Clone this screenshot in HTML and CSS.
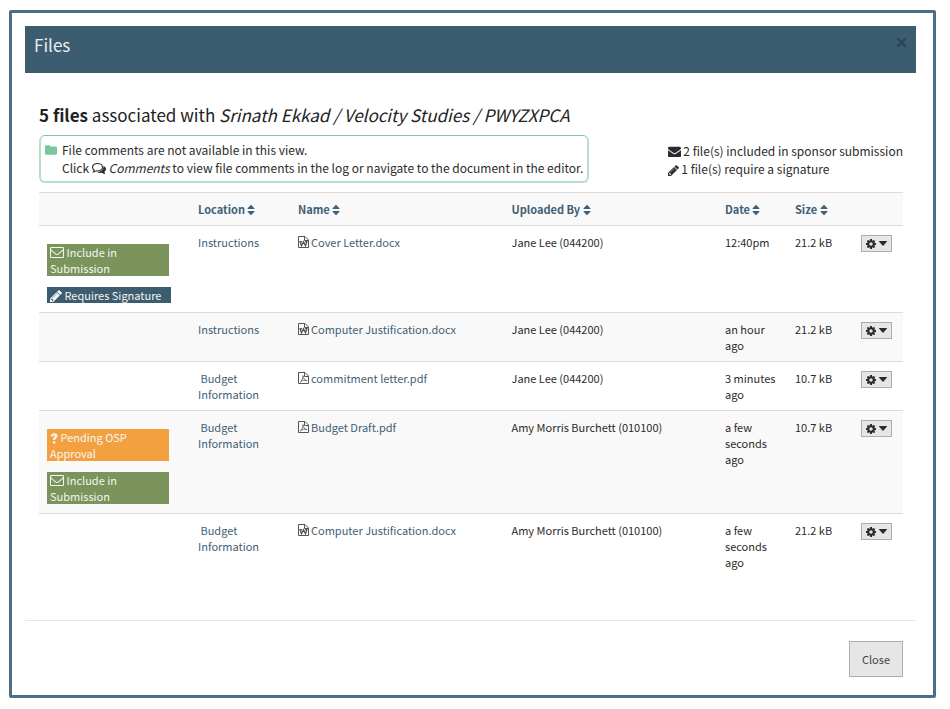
FILE: index.html
```html
<!DOCTYPE html>
<html lang="en">
<head>
<meta charset="utf-8">
<title>Files</title>
<link rel="stylesheet" href="styles.css">
</head>
<body>
<svg class="sprite" aria-hidden="true">
  <symbol id="envelope" viewBox="0 0 1792 1792"><path d="M1792 710v794q0 66-47 113t-113 47h-1472q-66 0-113-47t-47-113v-794q44 49 101 87 362 246 497 345 57 42 92.500 65.500t94.500 48 110 24.500h2q51 0 110-24.500t94.500-48 92.500-65.500q170-123 498-345 57-39 100-87zm0-294q0 79-49 151t-122 123q-376 261-468 325-10 7-42.500 31t-54 38-52 32.500-57.500 27-50 9h-2q-23 0-50-9t-57.500-27-52-32.500-54-38-42.500-31q-91-64-262-182.500t-205-142.500q-62-42-117-115.500t-55-136.500q0-78 41.500-130t118.500-52h1472q65 0 112.500 47t47.500 113z"/></symbol>
  <symbol id="envelope-open" viewBox="0 0 1792 1792"><path d="M1664 1504v-768q-32 36-69 66-268 206-426 338-51 43-83 67t-86.500 48.500-102.500 24.500h-2q-48 0-102.500-24.500t-86.500-48.500-83-67q-158-132-426-338-37-30-69-66v768q0 13 9.500 22.500t22.500 9.500h1472q13 0 22.500-9.500t9.500-22.500zm0-1051v-24.500l-.5-13-3-12.500-5.500-9-9-7.500-14-2.500h-1472q-13 0-22.500 9.500t-9.500 22.500q0 168 147 284 193 152 401 317 6 5 35 29.500t46 37.500 44.500 31.500 50.500 27.500 43 9h2q20 0 43-9t50.500-27.500 44.500-31.500 46-37.500 35-29.500q208-165 401-317 54-43 100.500-115.500t46.500-131.500zm128-37v1088q0 66-47 113t-113 47h-1472q-66 0-113-47t-47-113v-1088q0-66 47-113t113-47h1472q66 0 113 47t47 113z"/></symbol>
  <symbol id="pencil" viewBox="128 128 1536 1536"><path d="M491 1536l91-91-235-235-91 91v107h128v128h107zm523-928q0-22-22-22-10 0-17 7l-542 542q-7 7-7 17 0 22 22 22 10 0 17-7l542-542q7-7 7-17zm-54-192l416 416-832 832h-416v-416zm683 96q0 53-37 90l-166 166-416-416 166-165q36-38 90-38 53 0 91 38l235 234q37 39 37 91z"/></symbol>
  <symbol id="cog" viewBox="128 128 1536 1536"><path d="M1152 896q0-106-75-181t-181-75-181 75-75 181 75 181 181 75 181-75 75-181zm512-109v222q0 12-8 23t-20 13l-185 28q-19 54-39 91 35 50 107 138 10 12 10 25t-9 23q-27 37-99 108t-94 71q-12 0-26-9l-138-108q-44 23-91 38-16 136-29 186-7 28-36 28h-222q-14 0-24.500-8.500t-11.500-21.500l-28-184q-49-16-90-37l-141 107q-10 9-25 9-14 0-25-11-126-114-165-168-7-10-7-23 0-12 8-23 15-21 51-66.500t54-70.500q-27-50-41-99l-183-27q-13-2-21-12.500t-8-23.500v-222q0-12 8-23t19-13l186-28q14-46 39-92-40-57-107-138-10-12-10-24 0-10 9-23 26-36 98.500-107.500t94.500-71.500q13 0 26 10l138 107q44-23 91-38 16-136 29-186 7-28 36-28h222q14 0 24.500 8.500t11.500 21.500l28 184q49 16 90 37l142-107q9-9 24-9 13 0 25 10 129 119 165 170 7 8 7 22 0 12-8 23-15 21-51 66.500t-54 70.500q26 50 41 98l183 28q13 2 21 12.500t8 23.500z"/></symbol>
  <symbol id="sort" viewBox="0 0 8 12"><path d="M4 .8 7.400 4.300q.5.700-.4.700H1q-.9 0-.4-.7zM4 11.200.6 7.700Q.1 7 1 7h6q.9 0 .4.700z"/></symbol>
  <symbol id="caret" viewBox="0 0 8 5"><path d="M.5 0h7q.8 0 .3.700L4.500 4.400q-.5.500-1 0L.2.700Q-.3 0 .5 0z"/></symbol>
  <symbol id="folder" viewBox="0 0 12 10"><path d="M0 1.600Q0 .2 1.500.2h2.600q1.200 0 1.400 1.400h5Q12 1.600 12 3v5.300q0 1.500-1.500 1.500h-9Q0 9.800 0 8.300z"/></symbol>
  <symbol id="comments" viewBox="0 0 14 12"><path d="M5.500.5C2.700.5.500 2.100.5 4.200c0 1.200.7 2.200 1.800 2.900L1.400 8.900c1 0 2-.4 2.800-1l1.300.1c2.800 0 5-1.700 5-3.800S8.300.5 5.500.5z" fill="none" stroke="currentColor" stroke-width="1.100"/><path d="M11.500 3c1.500.6 2.500 1.800 2.500 3.100 0 1.200-.7 2.100-1.700 2.800l1 2.200c-1.400-.1-2.500-.6-3.300-1.300-1.900.3-3.800 0-5-.8 3.800.2 6.700-2.100 6.500-6z"/></symbol>
  <symbol id="question" viewBox="0 0 8 11"><path d="M.6 3.100Q1.500.2 4.200.2 7.500.2 7.500 3q0 1.500-1.600 2.400-.7.400-.7 1.500H2.900q0-1.900 1.100-2.600 1-.6 1-1.200 0-.8-.9-.8-.8 0-1.500 1.500zM2.900 8.200h2.400v2.400H2.900z"/></symbol>
  <symbol id="file-word" viewBox="0 0 11 12"><path d="M.5.500h6.500l3.500 3.500v7.500H.5zM6.500.5v4h4" fill="none" stroke="currentColor"/><path d="M2 5.500l1.500 4.300 2-4 2 4L9 5.500M1.500 5.700h2.500M7 5.700h2.500" fill="none" stroke="currentColor" stroke-width="1.300"/></symbol>
  <symbol id="file-pdf" viewBox="0 0 11 12"><path d="M.5.500h6.500l3.500 3.500v7.500H.5zM6.500.5v4h4" fill="none" stroke="currentColor"/><path d="M2.300 10c1.600-1 3.100-4 2.700-6.400.1 2.500 1.600 4.500 3.900 5.100C6.600 7.800 4 8.200 2.300 10z" fill="none" stroke="currentColor" stroke-width=".8"/></symbol>
  <symbol id="cross" viewBox="0 0 10 10"><path d="M1.300 1.300l7.400 7.400M8.700 1.300L1.300 8.700" fill="none" stroke="currentColor" stroke-width="2.400"/></symbol>
</svg>
<main class="modal">
  <header class="modal-header">
    <h1>Files</h1>
    <button class="dismiss" type="button" aria-label="Dismiss"><svg class="icon"><use href="#cross"/></svg></button>
  </header>
  <section class="modal-body">
    <h2><strong>5 files</strong> associated with <em>Srinath Ekkad / Velocity Studies / PWYZXPCA</em></h2>
    <div class="overview">
      <div class="notice">
        <svg class="icon folder"><use href="#folder"/></svg>
        <p>File comments are not available in this view.<br>Click <svg class="icon comments"><use href="#comments"/></svg> <em>Comments</em> to view file comments in the log or navigate to the document in the editor.</p>
      </div>
      <ul class="summary">
        <li><svg class="icon mail"><use href="#envelope"/></svg> 2 file(s) included in sponsor submission</li>
        <li><svg class="icon pencil"><use href="#pencil"/></svg> 1 file(s) require a signature</li>
      </ul>
    </div>
    <table>
      <colgroup><col class="c-tags"><col class="c-location"><col class="c-name"><col class="c-user"><col class="c-date"><col class="c-size"><col class="c-menu"></colgroup>
      <thead>
        <tr>
          <th></th>
          <th><a href="#">Location <svg class="icon sort"><use href="#sort"/></svg></a></th>
          <th><a href="#">Name <svg class="icon sort"><use href="#sort"/></svg></a></th>
          <th><a href="#">Uploaded By <svg class="icon sort"><use href="#sort"/></svg></a></th>
          <th><a href="#">Date <svg class="icon sort"><use href="#sort"/></svg></a></th>
          <th><a href="#">Size <svg class="icon sort"><use href="#sort"/></svg></a></th>
          <th></th>
        </tr>
      </thead>
      <tbody>
        <tr>
          <td><ul class="tags">
            <li class="tag include"><svg class="icon open"><use href="#envelope-open"/></svg> Include in Submission</li>
            <li class="tag signature"><svg class="icon pen"><use href="#pencil"/></svg> Requires Signature</li>
          </ul></td>
          <td><a href="#">Instructions</a></td>
          <td><a class="file" href="#"><svg class="icon"><use href="#file-word"/></svg>Cover Letter.docx</a></td>
          <td>Jane Lee (044200)</td><td>12:40pm</td><td>21.2 kB</td>
          <td><button class="menu" type="button" aria-label="Actions"><svg class="icon cog"><use href="#cog"/></svg><svg class="icon caret"><use href="#caret"/></svg></button></td>
        </tr>
        <tr>
          <td></td>
          <td><a href="#">Instructions</a></td>
          <td><a class="file" href="#"><svg class="icon"><use href="#file-word"/></svg>Computer Justification.docx</a></td>
          <td>Jane Lee (044200)</td><td>an hour ago</td><td>21.2 kB</td>
          <td><button class="menu" type="button" aria-label="Actions"><svg class="icon cog"><use href="#cog"/></svg><svg class="icon caret"><use href="#caret"/></svg></button></td>
        </tr>
        <tr>
          <td></td>
          <td><a href="#">&nbsp;Budget Information</a></td>
          <td><a class="file" href="#"><svg class="icon"><use href="#file-pdf"/></svg>commitment letter.pdf</a></td>
          <td>Jane Lee (044200)</td><td>3 minutes ago</td><td>10.7 kB</td>
          <td><button class="menu" type="button" aria-label="Actions"><svg class="icon cog"><use href="#cog"/></svg><svg class="icon caret"><use href="#caret"/></svg></button></td>
        </tr>
        <tr>
          <td><ul class="tags">
            <li class="tag pending"><svg class="icon question"><use href="#question"/></svg> Pending OSP Approval</li>
            <li class="tag include"><svg class="icon open"><use href="#envelope-open"/></svg> Include in Submission</li>
          </ul></td>
          <td><a href="#">&nbsp;Budget Information</a></td>
          <td><a class="file" href="#"><svg class="icon"><use href="#file-pdf"/></svg>Budget Draft.pdf</a></td>
          <td>Amy Morris Burchett (010100)</td><td>a few seconds ago</td><td>10.7 kB</td>
          <td><button class="menu" type="button" aria-label="Actions"><svg class="icon cog"><use href="#cog"/></svg><svg class="icon caret"><use href="#caret"/></svg></button></td>
        </tr>
        <tr>
          <td></td>
          <td><a href="#">&nbsp;Budget Information</a></td>
          <td><a class="file" href="#"><svg class="icon"><use href="#file-word"/></svg>Computer Justification.docx</a></td>
          <td>Amy Morris Burchett (010100)</td><td>a few seconds ago</td><td>21.2 kB</td>
          <td><button class="menu" type="button" aria-label="Actions"><svg class="icon cog"><use href="#cog"/></svg><svg class="icon caret"><use href="#caret"/></svg></button></td>
        </tr>
      </tbody>
    </table>
  </section>
  <footer class="modal-footer"><button class="close" type="button">Close</button></footer>
</main>
</body>
</html>
```
FILE: styles.css
```css
* { box-sizing: border-box; }
body {
  margin: 10px 14px 10px 9px;
  background: #fff;
  color: #2b2b2b;
  font-family: "Noto Sans CJK JP", "Open Sans", sans-serif;
  font-size: 11px;
  line-height: 16px;
}
h1, h2, p, ul { margin: 0; padding: 0; font-weight: normal; }
ul { list-style: none; }
a { color: #3f6076; text-decoration: none; }
button { font: inherit; color: inherit; cursor: pointer; }
.sprite { display: none; }
.icon { display: inline-block; fill: currentColor; vertical-align: -2px; }

.modal { border: 3px solid #4b7086; border-radius: 2px; padding: 13px 17px 18px 13px; }
.modal-header {
  display: flex;
  justify-content: space-between;
  align-items: flex-start;
  padding: 7px 9px 16px;
  background: #3c5c6f;
  color: #e9eef1;
}
.modal-header h1 { font-size: 17px; line-height: 24px; }
.dismiss { border: 0; padding: 4px 0; background: none; color: #2d4654; line-height: 0; }
.dismiss .icon { width: 11px; height: 11px; }

.modal-body { padding: 31px 13px 42px 14px; }
h2 { font-size: 17px; line-height: 22px; color: #222; }
.overview {
  display: flex;
  justify-content: space-between;
  align-items: flex-start;
  margin: 9px 0;
  font-size: 12px;
  line-height: 18px;
  white-space: nowrap;
}
.notice {
  display: flex;
  gap: 5px;
  padding: 5px 4px 4px;
  border: 2px solid #b5dfcb;
  border-top: 1px solid #7cc6a0;
  border-radius: 6px;
}
.folder { width: 12px; height: 10px; margin-top: 4px; color: #7ac6a0; }
.comments { width: 14px; height: 12px; }
.summary { padding-top: 7px; }
.mail { width: 13px; height: 13px; }
.pencil { width: 11px; height: 11px; }

table { width: 100%; table-layout: fixed; border-collapse: collapse; }
.c-tags { width: 151px; }
.c-location { width: 100px; }
.c-date { width: 70px; }
.c-size { width: 66px; }
.c-menu { width: 50px; }
th, td { padding: 8px; border-top: 1px solid #dcdcdc; text-align: left; vertical-align: top; }
thead tr, tbody tr:nth-child(even) { background: #f9f9f9; }
.file { display: flex; align-items: center; gap: 2px; white-space: nowrap; }
.file .icon { width: 11px; height: 12px; color: #555; }
.sort { width: 8px; height: 12px; }
.tags { display: grid; gap: 11px; padding: 10px 0 1px; }
.tag { width: 90%; padding: 0 3px; color: #f4f6f1; }
.include { background: #7a945c; }
.pending { background: #f3a040; }
.signature { width: max-content; padding-right: 10px; background: #3c5c6f; }
.open { width: 14px; height: 14px; }
.pen { width: 12px; height: 12px; }
.question { width: 8px; height: 11px; }
.menu, .close { background: #e6e6e6; border: 1px solid #adadad; border-radius: 0; }
.menu { display: flex; align-items: center; gap: 3px; height: 17px; padding: 0 4px; margin-top: 1px; }
.cog { width: 10px; height: 10px; }
.caret { width: 8px; height: 5px; }

.modal-footer { display: flex; justify-content: flex-end; padding: 20px 13px 0; border-top: 1px solid #e5e5e5; }
.close { padding: 9px 12px; color: #444; }
```
